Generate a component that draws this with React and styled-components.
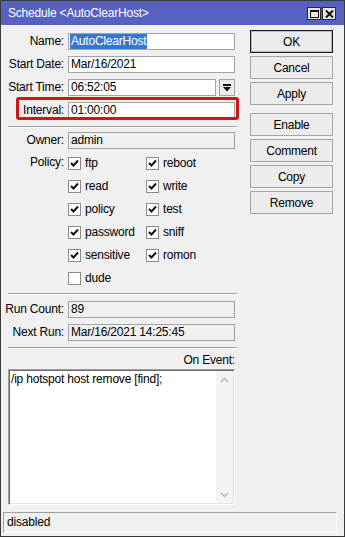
import React from 'react';
import styled, { createGlobalStyle, css } from 'styled-components';

const Global = createGlobalStyle`
  html, body { margin: 0; padding: 0; background: #ffffff; }
  body {
    font-family: "Liberation Sans Narrow", "Arial Narrow", "Liberation Sans", Arial, sans-serif;
    font-size: 12px;
    letter-spacing: -0.2px;
    color: #000;
  }
  * { box-sizing: border-box; }
`;

const Window = styled.div`
  width: 345px;
  height: 537px;
  display: flex;
  flex-direction: column;
  background: #f0f0f0;
  border: 1px solid #3a3a3a;
`;

const TitleBar = styled.div`
  height: 24px;
  flex: none;
  display: flex;
  align-items: center;
  justify-content: space-between;
  padding: 0 8px 0 7px;
  background: #5661c0;
  color: #fff;
`;

const TitleText = styled.span`
  font-size: 12px;
  line-height: 15px;
`;

const TitleButtons = styled.div`
  display: flex;
  gap: 1px;
  margin-top: 1px;
`;

const TitleButton = styled.div`
  width: 14px;
  height: 13px;
  border: 1px solid #2b2b2b;
  background: #e6e6e6;
  display: flex;
  align-items: center;
  justify-content: center;
`;

const Body = styled.div`
  flex: 1;
  display: flex;
  padding: 0 10px 0 7px;
  min-height: 0;
`;

const LeftPanel = styled.div`
  width: 229px;
  padding-top: 8px;
  display: flex;
  flex-direction: column;
`;

const RightPanel = styled.div`
  margin-left: 13px;
  width: 83px;
  padding-top: 5px;
  display: flex;
  flex-direction: column;
`;

const ButtonGroup = styled.div`
  display: flex;
  flex-direction: column;
  gap: 3px;
  & + & { margin-top: 8px; }
`;

const Button = styled.div`
  height: 23px;
  display: flex;
  align-items: center;
  justify-content: center;
  background: #ececec;
  border: 1px solid #a5a5a5;
  ${(p) => p.$default && css`
    border-color: #1c1c1c;
    box-shadow: inset 0 0 0 1px #b8b8b8;
  `}
`;

const FieldRow = styled.div`
  position: relative;
  display: flex;
  align-items: center;
  height: 17px;
  padding-right: 2px;
  & + & { margin-top: 6px; }
  ${(p) => p.$highlight && css`
    &::after {
      content: '';
      position: absolute;
      top: -5px;
      left: 8px;
      right: -2px;
      bottom: -1px;
      border: 3px solid #d4141c;
      border-radius: 3px;
      pointer-events: none;
    }
  `}
`;

const Label = styled.div`
  width: 60px;
  flex: none;
  display: flex;
  justify-content: flex-end;
  padding-right: 4px;
  white-space: nowrap;
  line-height: 15px;
  align-self: ${(p) => (p.$top ? 'flex-start' : 'center')};
`;

const Input = styled.div`
  flex: 1;
  height: 17px;
  border: 1px solid #a3a3a3;
  background: ${(p) => (p.$disabled ? '#f0f0f0' : '#ffffff')};
  padding-left: 2px;
  line-height: 15px;
  white-space: nowrap;
  overflow: hidden;
`;

const Selected = styled.span`
  background: #3379d2;
  color: #fff;
  margin-left: -1px;
  padding: 1px 1px;
`;

const DropButton = styled.div`
  width: 16px;
  height: 17px;
  margin-left: 3px;
  flex: none;
  border: 1px solid #a3a3a3;
  background: #ececec;
  display: flex;
  align-items: center;
  justify-content: center;
`;

const Separator = styled.div`
  height: 2px;
  flex: none;
  border-top: 1px solid #a0a0a0;
  border-bottom: 1px solid #ffffff;
  margin: ${(p) => p.$m || '6px 0 6px'};
`;

const PolicyRow = styled.div`
  display: flex;
  margin-top: 6px;
`;

const CheckGrid = styled.div`
  display: grid;
  grid-template-columns: 78px 78px;
  grid-auto-rows: 17px;
  row-gap: 6px;
`;

const CheckItem = styled.div`
  display: flex;
  align-items: center;
  gap: 4px;
  line-height: 15px;
  white-space: nowrap;
`;

const Box = styled.div`
  width: 13px;
  height: 13px;
  flex: none;
  border: 1px solid #8a8a8a;
  background: #fff;
  display: flex;
  align-items: center;
  justify-content: center;
`;

const EventLabel = styled.div`
  text-align: right;
  padding-right: 2px;
  line-height: 14px;
  height: 14px;
`;

const TextArea = styled.div`
  margin-top: 2px;
  margin-right: 2px;
  height: 136px;
  display: flex;
  background: #fff;
  border: 1px solid;
  border-color: #a0a0a0 #ffffff #ffffff #a0a0a0;
  box-shadow: inset 1px 1px 0 #6b6b6b, inset -1px -1px 0 #e3e3e3;
`;

const TextContent = styled.div`
  flex: 1;
  padding: 2px 0 0 2px;
  line-height: 15px;
  white-space: nowrap;
`;

const ScrollTrack = styled.div`
  width: 17px;
  margin: 1px 1px 1px 0;
  background: #f4f4f4;
  display: flex;
  flex-direction: column;
  justify-content: space-between;
  align-items: center;
  padding: 6px 0 5px;
`;

const StatusBar = styled.div`
  height: 21px;
  flex: none;
  margin: 0 7px 3px 2px;
  border: 1px solid;
  border-color: #a0a0a0 #ffffff #ffffff #a0a0a0;
  padding-left: 3px;
  line-height: 18px;
`;

const Check = () => (
  <svg width="9" height="9" viewBox="0 0 9 9">
    <path d="M1 4 L3.5 6.5 L8 1.5" fill="none" stroke="#111" strokeWidth="2" />
  </svg>
);

const CheckBox = ({ label, checked }) => (
  <CheckItem>
    <Box>{checked && <Check />}</Box>
    <span>{label}</span>
  </CheckItem>
);

const Chevron = ({ up }) => (
  <svg width="9" height="6" viewBox="0 0 9 6">
    <polyline
      points={up ? '1,5 4.5,1.5 8,5' : '1,1 4.5,4.5 8,1'}
      fill="none"
      stroke="#b9b9b9"
      strokeWidth="1.6"
    />
  </svg>
);

const policies = [
  ['ftp', true], ['reboot', true],
  ['read', true], ['write', true],
  ['policy', true], ['test', true],
  ['password', true], ['sniff', true],
  ['sensitive', true], ['romon', true],
  ['dude', false],
];

export default function App() {
  return (
    <>
      <Global />
      <Window>
        <TitleBar>
          <TitleText>Schedule &lt;AutoClearHost&gt;</TitleText>
          <TitleButtons>
            <TitleButton>
              <svg width="9" height="8" viewBox="0 0 9 8">
                <rect x="0.5" y="1" width="8" height="6.5" fill="none" stroke="#111" strokeWidth="1" />
                <rect x="0" y="0" width="9" height="2" fill="#111" />
              </svg>
            </TitleButton>
            <TitleButton>
              <svg width="9" height="8" viewBox="0 0 9 8">
                <path d="M1 0.5 L8 7.5 M8 0.5 L1 7.5" stroke="#111" strokeWidth="2" />
              </svg>
            </TitleButton>
          </TitleButtons>
        </TitleBar>
        <Body>
          <LeftPanel>
            <FieldRow>
              <Label>Name:</Label>
              <Input><Selected>AutoClearHost</Selected></Input>
            </FieldRow>
            <FieldRow>
              <Label>Start Date:</Label>
              <Input>Mar/16/2021</Input>
            </FieldRow>
            <FieldRow>
              <Label>Start Time:</Label>
              <Input>06:52:05</Input>
              <DropButton>
                <svg width="8" height="8" viewBox="0 0 8 8">
                  <rect x="0" y="0" width="8" height="2" fill="#111" />
                  <polygon points="0,3 8,3 4,7.5" fill="#111" />
                </svg>
              </DropButton>
            </FieldRow>
            <FieldRow $highlight>
              <Label>Interval:</Label>
              <Input>01:00:00</Input>
            </FieldRow>
            <Separator $m="7px 0 4px" />
            <FieldRow>
              <Label>Owner:</Label>
              <Input $disabled>admin</Input>
            </FieldRow>
            <PolicyRow>
              <Label $top>Policy:</Label>
              <CheckGrid>
                {policies.map(([name, on]) => (
                  <CheckBox key={name} label={name} checked={on} />
                ))}
              </CheckGrid>
            </PolicyRow>
            <Separator />
            <FieldRow>
              <Label>Run Count:</Label>
              <Input $disabled>89</Input>
            </FieldRow>
            <FieldRow>
              <Label>Next Run:</Label>
              <Input $disabled>Mar/16/2021 14:25:45</Input>
            </FieldRow>
            <Separator $m="6px 0 4px" />
            <EventLabel>On Event:</EventLabel>
            <TextArea>
              <TextContent>/ip hotspot host remove [find];</TextContent>
              <ScrollTrack>
                <Chevron up />
                <Chevron />
              </ScrollTrack>
            </TextArea>
          </LeftPanel>
          <RightPanel>
            <ButtonGroup>
              <Button $default>OK</Button>
              <Button>Cancel</Button>
              <Button>Apply</Button>
            </ButtonGroup>
            <ButtonGroup>
              <Button>Enable</Button>
              <Button>Comment</Button>
              <Button>Copy</Button>
              <Button>Remove</Button>
            </ButtonGroup>
          </RightPanel>
        </Body>
        <StatusBar>disabled</StatusBar>
      </Window>
    </>
  );
}
